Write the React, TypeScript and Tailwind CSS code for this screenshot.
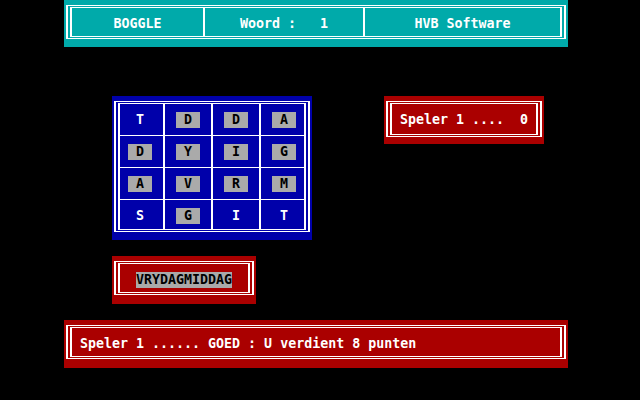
import clsx from 'clsx'

const BOARD = [
  ['T', 'D', 'D', 'A'],
  ['D', 'Y', 'I', 'G'],
  ['A', 'V', 'R', 'M'],
  ['S', 'G', 'I', 'T'],
]

// letters that are already used in the word are shown on a grey tile
const USED = [
  [false, true, true, true],
  [true, true, true, true],
  [true, true, true, true],
  [false, true, false, false],
]

function DoubleBox({ className, children }: { className?: string; children?: React.ReactNode }) {
  return <div className={clsx('border-x-[6px] border-y-[3px] border-double border-white', className)}>{children}</div>
}

export default function App() {
  return (
    <div className="h-[400px] w-[640px] overflow-hidden bg-black font-['DejaVu_Sans_Mono',monospace] text-[13.3px] leading-4 font-bold whitespace-pre text-white">
      {/* header */}
      <div className="ml-16 h-[47px] w-[504px] bg-[#00aaaa] pt-[5px] pl-[2px]">
        <DoubleBox className="flex h-[34px] w-[500px]">
          <div className="flex w-[133px] justify-center border-r-2 border-white pt-2">BOGGLE</div>
          <div className="flex w-[160px] justify-center border-r-2 border-white pt-2">Woord :   1</div>
          <div className="flex flex-1 justify-center pt-2">HVB Software</div>
        </DoubleBox>
      </div>

      <div className="mt-[49px] flex items-start pl-[112px]">
        {/* board */}
        <div className="h-[144px] w-[200px] bg-[#0000aa] pt-[5px] pl-[2px]">
          <DoubleBox className="grid h-[131px] w-[196px] grid-cols-[45px_48px_48px_43px] grid-rows-[32px_32px_32px_29px]">
            {BOARD.map((row, r) =>
              row.map((letter, c) => (
                <div
                  key={`${r}-${c}`}
                  className={clsx('pt-2', c === 0 ? 'pl-2' : 'pl-[11px]', {
                    'border-r-2 border-white': c < 3,
                    'border-b border-b-white': r < 3,
                  })}
                >
                  <div className={clsx('flex h-4 w-6 justify-center', USED[r][c] && 'bg-[#aaaaaa] text-black')}>
                    {letter}
                  </div>
                </div>
              )),
            )}
          </DoubleBox>
        </div>

        {/* score */}
        <div className="ml-[72px] h-[48px] w-[160px] bg-[#aa0000] pt-[5px] pl-[2px]">
          <DoubleBox className="h-[36px] w-[156px] pt-2 pl-2">Speler 1 ....  0</DoubleBox>
        </div>
      </div>

      {/* current word */}
      <div className="mt-4 ml-[112px] h-[48px] w-[144px] bg-[#aa0000] pt-[5px] pl-[2px]">
        <DoubleBox className="h-[34px] w-[140px] pt-2 pl-4">
          <span className="inline-block bg-[#aaaaaa] text-black">VRYDAGMIDDAG</span>
        </DoubleBox>
      </div>

      {/* message */}
      <div className="mt-4 ml-16 h-[48px] w-[504px] bg-[#aa0000] pt-[5px] pl-[2px]">
        <DoubleBox className="h-[34px] w-[500px] pt-2 pl-2">Speler 1 ...... GOED : U verdient 8 punten</DoubleBox>
      </div>
    </div>
  )
}
